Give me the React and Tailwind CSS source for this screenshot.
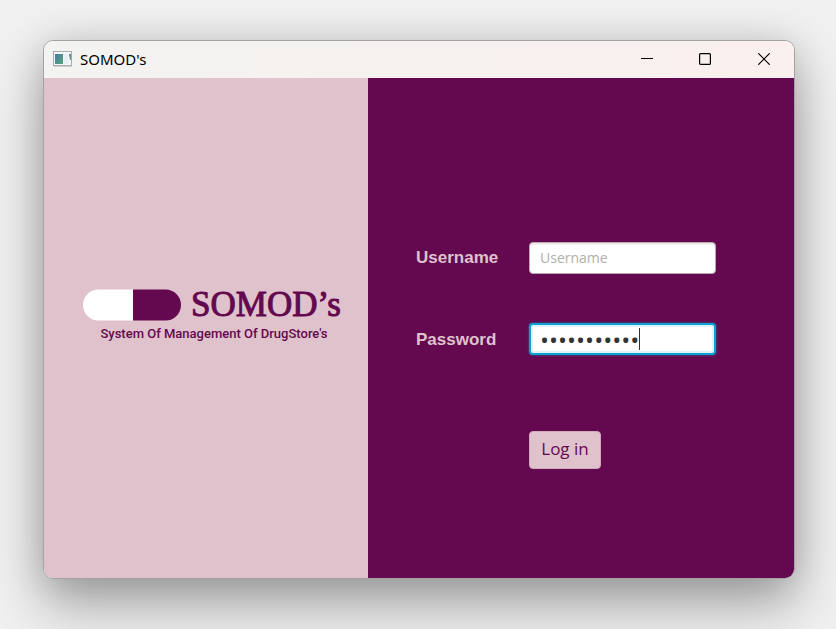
import { useState } from "react";

function AppIcon() {
  return (
    <svg width="20" height="16" viewBox="0 0 20 16" aria-hidden="true">
      <defs>
        <linearGradient id="screen" x1="0" y1="0" x2="1" y2="1">
          <stop offset="0" stopColor="#4a78a8" />
          <stop offset="1" stopColor="#55a878" />
        </linearGradient>
      </defs>
      <rect x="0.5" y="0.5" width="18" height="14" fill="#f4f6f8" stroke="#a9adb2" />
      <path d="M1 15.5h18" stroke="#cfcfcf" />
      <rect x="2" y="3" width="8" height="10" fill="url(#screen)" />
      <rect x="11" y="3" width="4" height="10" fill="#eceff1" />
      <path d="M16 3h2v6h-1z" fill="url(#screen)" />
    </svg>
  );
}

function TitleBar() {
  return (
    <header className="flex h-[37px] shrink-0 items-center justify-between bg-linear-to-r from-[#f3f3f1] to-[#faf0ee] pl-[9px]">
      <div className="flex items-center gap-[7px] pb-px">
        <AppIcon />
        <h1 className="font-['Noto_Sans',sans-serif] text-[15px] leading-5 text-black">SOMOD's</h1>
      </div>
      <div className="flex h-full pb-px text-black">
        <button type="button" aria-label="Minimize" className="flex w-[58px] items-center justify-center">
          <svg width="12" height="12" viewBox="0 0 12 12" stroke="currentColor">
            <path d="M0 5.5h12" />
          </svg>
        </button>
        <button type="button" aria-label="Maximize" className="flex w-[58px] items-center justify-center">
          <svg width="12" height="12" viewBox="0 0 12 12" fill="none" stroke="currentColor" strokeWidth="1.2">
            <rect x="0.6" y="0.6" width="10.8" height="10.8" rx="1" />
          </svg>
        </button>
        <button type="button" aria-label="Close" className="flex w-[60px] items-center justify-center">
          <svg width="12" height="12" viewBox="0 0 12 12" stroke="currentColor" strokeWidth="1.2">
            <path d="M0.3 0.3 11.7 11.7M11.7 0.3 0.3 11.7" />
          </svg>
        </button>
      </div>
    </header>
  );
}

function Brand() {
  return (
    <section className="flex w-[43.2%] flex-col items-center justify-center bg-[#dfc2cb] pb-[25px] text-[#64084f]">
      <div className="flex items-center gap-[10px] pl-3">
        <svg width="98" height="32" viewBox="0 0 98 32" aria-hidden="true">
          <path d="M50 0.5H15.500a15.500 15.500 0 0 0 0 31H50z" fill="#fff" />
          <path d="M50 0.500H82.500a15.500 15.500 0 0 1 0 31H50z" fill="#64084f" />
        </svg>
        <p className="font-['Liberation_Serif',serif] text-[35px] leading-8 [-webkit-text-stroke:1px_#64084f]">SOMOD’s</p>
      </div>
      <p className="mt-[5px] pl-4 font-['Roboto',sans-serif] text-[13px] leading-4 font-medium whitespace-nowrap">
        System Of Management Of DrugStore's
      </p>
    </section>
  );
}

const labelClass = "font-['Liberation_Sans',Arial,sans-serif] text-[17px] leading-6 font-bold text-[#dfc2cb]";

function LoginForm() {
  const [username, setUsername] = useState("");
  const [password, setPassword] = useState("somod-admin");
  return (
    <section className="flex flex-1 items-center bg-[#64084f] pt-[54px] pl-12">
      <form
        className="grid grid-cols-[97px_187px] items-center gap-x-4"
        onSubmit={(event) => event.preventDefault()}
      >
        <label htmlFor="username" className={`${labelClass} pt-px`}>
          Username
        </label>
        <input
          id="username"
          type="text"
          placeholder="Username"
          value={username}
          onChange={(event) => setUsername(event.target.value)}
          className="h-8 w-full rounded-[4px] border border-[#b9a9b5] bg-white px-[10px] font-['Open_Sans','Noto_Sans',sans-serif] text-sm text-[#333] shadow-[inset_0_2px_2px_#ececec] outline-none placeholder:text-[#b0b0b0]"
        />
        <label htmlFor="password" className={`${labelClass} mt-[51px] pt-px`}>
          Password
        </label>
        <div className="relative mt-[49px]">
          <input
            id="password"
            type="password"
            value={password}
            onChange={(event) => setPassword(event.target.value)}
            className="block h-8 w-full rounded-[4px] border-2 border-[#10a0d0] bg-white px-[9px] pt-[2px] font-['Open_Sans',sans-serif] text-2xl text-[#333] shadow-[0_0_2px_#0f96cd,inset_0_0_0_2px_#dff3fb] outline-none"
          />
          <span aria-hidden="true" className="absolute top-[5px] left-[110px] h-[22px] w-px bg-[#333]" />
        </div>
        <button
          type="submit"
          className="col-start-2 mt-[76px] h-[38px] w-[72px] rounded-[4px] border border-[#d0a9bb] bg-[#dfc2cb] pb-[2px] font-['Open_Sans','Noto_Sans',sans-serif] text-[17px] leading-6 text-[#64084f]"
        >
          Log in
        </button>
      </form>
    </section>
  );
}

export default function App() {
  return (
    <div className="flex min-h-screen bg-[#f0f0f0] pt-10 pr-[41px] pb-[50px] pl-[43px]">
      <main className="flex flex-1 flex-col overflow-hidden rounded-[10px] border border-[#a3a3a3] shadow-[0_26px_52px_rgba(0,0,0,0.32),0_0_36px_rgba(0,0,0,0.12)]">
        <TitleBar />
        <div className="flex flex-1">
          <Brand />
          <LoginForm />
        </div>
      </main>
    </div>
  );
}
